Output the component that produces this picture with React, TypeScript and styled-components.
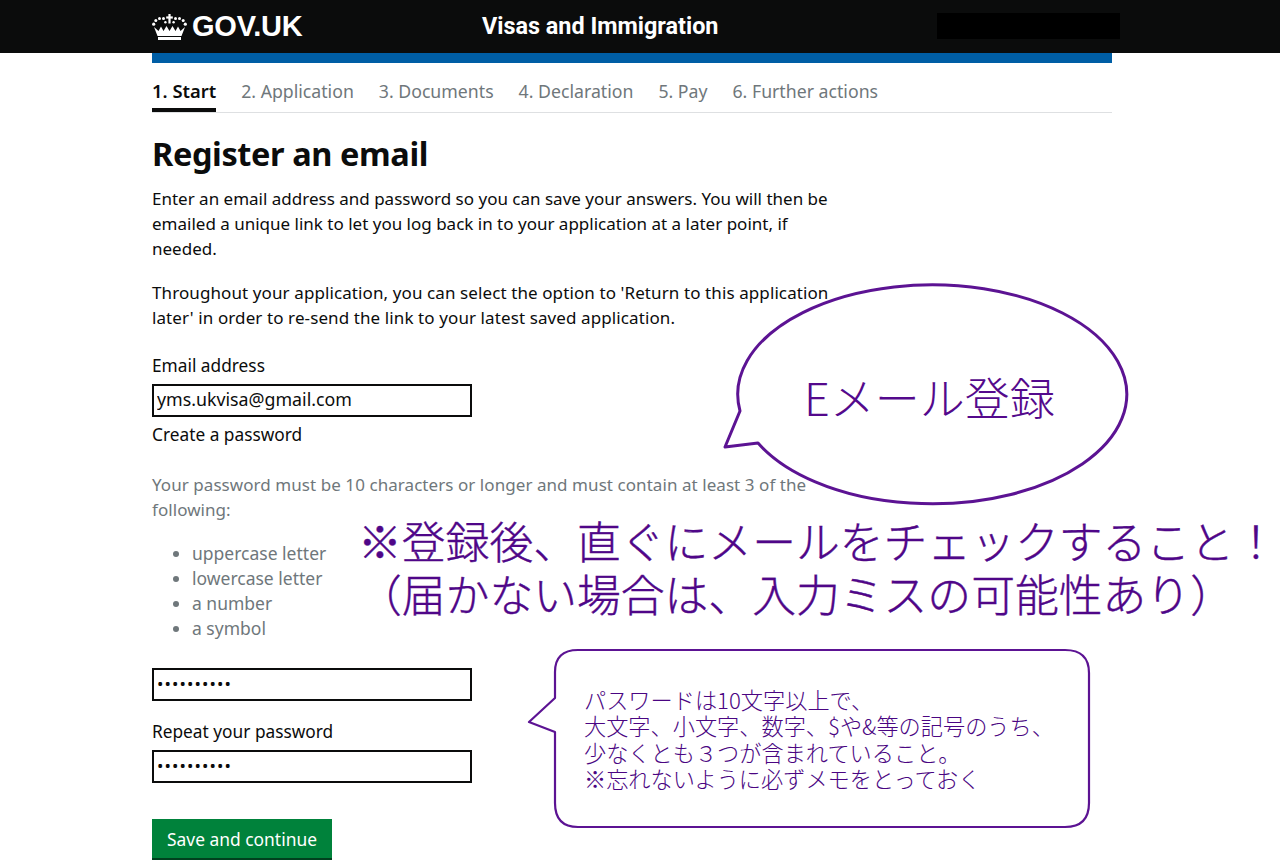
import React from 'react'
import styled, { createGlobalStyle } from 'styled-components'

const purple = '#5c1393'

const GlobalStyle = createGlobalStyle`
  html, body {
    margin: 0;
    padding: 0;
    background: #fff;
  }
  body {
    width: 1280px;
    height: 860px;
    overflow: hidden;
    font-family: "Noto Sans", "Liberation Sans", sans-serif;
    color: #0b0c0c;
  }
`

const Page = styled.div`
  position: relative;
  width: 1280px;
  height: 860px;
  overflow: hidden;
`

const Header = styled.header`
  display: flex;
  align-items: center;
  height: 53px;
  padding-left: 152px;
  background: #0b0c0c;
  color: #fff;
`

const Logo = styled.div`
  display: flex;
  align-items: center;
  gap: 5px;
  width: 330px;
  font-family: "Liberation Sans", Arial, sans-serif;
  font-size: 29px;
  font-weight: 700;
  letter-spacing: -0.2px;
`

const ServiceName = styled.div`
  width: 455px;
  font-family: Roboto, sans-serif;
  font-size: 23.4px;
  font-weight: 700;
  margin-top: -2px;
`

const HiddenBlock = styled.div`
  width: 183px;
  height: 26px;
  margin-top: -2px;
  background: #000;
`

const Main = styled.main`
  width: 960px;
  margin-left: 152px;
`

const BlueBar = styled.div`
  height: 10px;
  background: #005ea5;
`

const Steps = styled.nav`
  display: flex;
  gap: 25px;
  height: 49px;
  border-bottom: 1px solid #dee0e2;
`

const Step = styled.div<{ $active?: boolean }>`
  height: 45px;
  line-height: 56px;
  font-size: ${p => (p.$active ? 18.4 : 17.7)}px;
  font-weight: ${p => (p.$active ? 600 : 400)};
  color: ${p => (p.$active ? '#0b0c0c' : '#6f777b')};
  border-bottom: 4px solid ${p => (p.$active ? '#0b0c0c' : 'transparent')};
`

const Title = styled.h1`
  margin: 19px 0 0;
  font-size: 32.5px;
  line-height: 44px;
  font-weight: 700;
  letter-spacing: -0.4px;
`

const Paragraph = styled.p<{ $muted?: boolean; $tracking?: number }>`
  width: 690px;
  margin: 0 0 19px;
  font-size: 17px;
  line-height: 25px;
  letter-spacing: ${p => p.$tracking ?? 0}px;
  color: ${p => (p.$muted ? '#6f777b' : '#0b0c0c')};
`

const Lead = styled.div`
  margin-top: 10px;
`

const FieldLabel = styled.label`
  display: block;
  font-size: 17.3px;
  line-height: 25px;
`

const TextInput = styled.input<{ $secret?: boolean }>`
  display: block;
  box-sizing: border-box;
  width: 320px;
  height: 33px;
  padding: 0 3px 3px;
  border: 2.5px solid #0b0c0c;
  border-radius: 0;
  outline: none;
  font-family: "Noto Sans", sans-serif;
  font-size: ${p => (p.$secret ? 17 : 17.8)}px;
  letter-spacing: ${p => (p.$secret ? '1.1px' : '0')};
  color: #0b0c0c;
`

const EmailField = styled.div`
  margin-top: 23px;
  display: flex;
  flex-direction: column;
  gap: 6px;
`

const PasswordLabel = styled(FieldLabel)`
  margin-top: 5px;
`

const Rules = styled.div`
  margin-top: 25px;
`

const RuleList = styled.ul`
  margin: 0 0 27px;
  padding-left: 40px;
  font-size: 17.5px;
  line-height: 25px;
  color: #6f777b;
`

const RepeatField = styled.div`
  margin-top: 18px;
  display: flex;
  flex-direction: column;
  gap: 6px;
`

const SaveButton = styled.button`
  display: block;
  box-sizing: border-box;
  width: 180px;
  height: 41px;
  margin-top: 36px;
  padding: 0;
  border: 0;
  border-bottom: 2px solid #00401e;
  background: #00823b;
  color: #fff;
  font-family: "Noto Sans", sans-serif;
  font-size: 17.4px;
`

const Callout = styled.div`
  position: absolute;
  left: 720px;
  top: 282px;
  width: 410px;
  height: 226px;
`

const CalloutText = styled.div`
  position: absolute;
  left: 84px;
  top: 85px;
  font-family: "Noto Sans CJK JP", sans-serif;
  font-size: 45px;
  font-weight: 300;
  line-height: 60px;
  color: #54098c;
  white-space: nowrap;
`

const Notice = styled.div`
  position: absolute;
  left: 358px;
  top: 514px;
  width: 922px;
  font-family: "Noto Sans CJK JP", sans-serif;
  font-size: 43.8px;
  font-weight: 300;
  line-height: 53px;
  color: #4f0688;
  -webkit-text-stroke: 0.4px #4f0688;
  white-space: nowrap;
`

const NoteBox = styled.div`
  position: absolute;
  left: 526px;
  top: 648px;
  width: 566px;
  height: 182px;
`

const NoteText = styled.div`
  position: absolute;
  left: 58px;
  top: 38px;
  font-family: "Noto Sans CJK JP", sans-serif;
  font-size: 22.2px;
  font-weight: 300;
  line-height: 26.3px;
  color: #4a0582;
  white-space: nowrap;
`

const Crown = () => (
  <svg width="35" height="26" viewBox="0 0 35 26" fill="#fff">
    <rect x="16.4" y="0" width="2.2" height="9.5" />
    <rect x="14.2" y="2.4" width="6.6" height="2.2" />
    <circle cx="11.5" cy="4.6" r="1.5" />
    <circle cx="23.5" cy="4.6" r="1.5" />
    <circle cx="7.5" cy="4.6" r="1.5" />
    <circle cx="27.5" cy="4.6" r="1.5" />
    <circle cx="3.8" cy="6.6" r="1.5" />
    <circle cx="31.2" cy="6.6" r="1.5" />
    <circle cx="1.7" cy="10.2" r="1.6" />
    <circle cx="33.3" cy="10.2" r="1.6" />
    <circle cx="13.4" cy="8.2" r="1.2" />
    <circle cx="21.6" cy="8.2" r="1.2" />
    <path d="M2 13 L5.500 22 H29.500 L33 13 L28.500 17 L26 12.500 L23.500 17 L20.500 12 L17.500 17 L14.500 12 L11.500 17 L9 12.500 L6.500 17 Z" />
    <rect x="6" y="23" width="23" height="3" />
  </svg>
)

const steps = ['1. Start', '2. Application', '3. Documents', '4. Declaration', '5. Pay', '6. Further actions']

const App: React.FC = () => {
  return <>
    <GlobalStyle />
    <Page>
      <Header>
        <Logo>
          <Crown />
          GOV.UK
        </Logo>
        <ServiceName>Visas and Immigration</ServiceName>
        <HiddenBlock />
      </Header>
      <Main>
        <BlueBar />
        <Steps>
          {steps.map((s, i) => <Step key={s} $active={i === 0}>{s}</Step>)}
        </Steps>
        <Title>Register an email</Title>
        <Lead>
          <Paragraph>
            Enter an email address and password so you can save your answers. You will then be emailed a unique link to let you log back in to your application at a later point, if needed.
          </Paragraph>
          <Paragraph $tracking={0.1}>
            Throughout your application, you can select the option to 'Return to this application later' in order to re-send the link to your latest saved application.
          </Paragraph>
        </Lead>
        <EmailField>
          <FieldLabel>Email address</FieldLabel>
          <TextInput type="text" defaultValue="yms.ukvisa@gmail.com" readOnly />
        </EmailField>
        <PasswordLabel>Create a password</PasswordLabel>
        <Rules>
          <Paragraph $muted $tracking={0.06}>
            Your password must be 10 characters or longer and must contain at least 3 of the following:
          </Paragraph>
          <RuleList>
            <li>uppercase letter</li>
            <li>lowercase letter</li>
            <li>a number</li>
            <li>a symbol</li>
          </RuleList>
        </Rules>
        <TextInput $secret type="password" defaultValue="abcdefghij" readOnly />
        <RepeatField>
          <FieldLabel>Repeat your password</FieldLabel>
          <TextInput $secret type="password" defaultValue="abcdefghij" readOnly />
        </RepeatField>
        <SaveButton>Save and continue</SaveButton>
      </Main>

      <Callout>
        <svg width="410" height="226" viewBox="0 0 410 226">
          <path
            d="M20 129 A194.500 109.500 0 1 1 38 161 L5 165 Z"
            fill="#fff"
            stroke={purple}
            strokeWidth="3"
            strokeLinejoin="round"
          />
        </svg>
        <CalloutText>Eメール登録</CalloutText>
      </Callout>

      <Notice>
        ※登録後、直ぐにメールをチェックすること！<br />
        （届かない場合は、入力ミスの可能性あり）
      </Notice>

      <NoteBox>
        <svg width="566" height="182" viewBox="0 0 566 182">
          <path
            d="M29 24 Q29 2 52 2 H539 Q563 2 563 25 V155 Q563 179 539 179 H52 Q29 179 29 155 V84 L3 74 L29 50 Z"
            fill="#fff"
            stroke={purple}
            strokeWidth="2.200"
            strokeLinejoin="round"
          />
        </svg>
        <NoteText>
          パスワードは10文字以上で、<br />
          大文字、小文字、数字、$や&amp;等の記号のうち、<br />
          少なくとも３つが含まれていること。<br />
          ※忘れないように必ずメモをとっておく
        </NoteText>
      </NoteBox>
    </Page>
  </>
}

export default App
